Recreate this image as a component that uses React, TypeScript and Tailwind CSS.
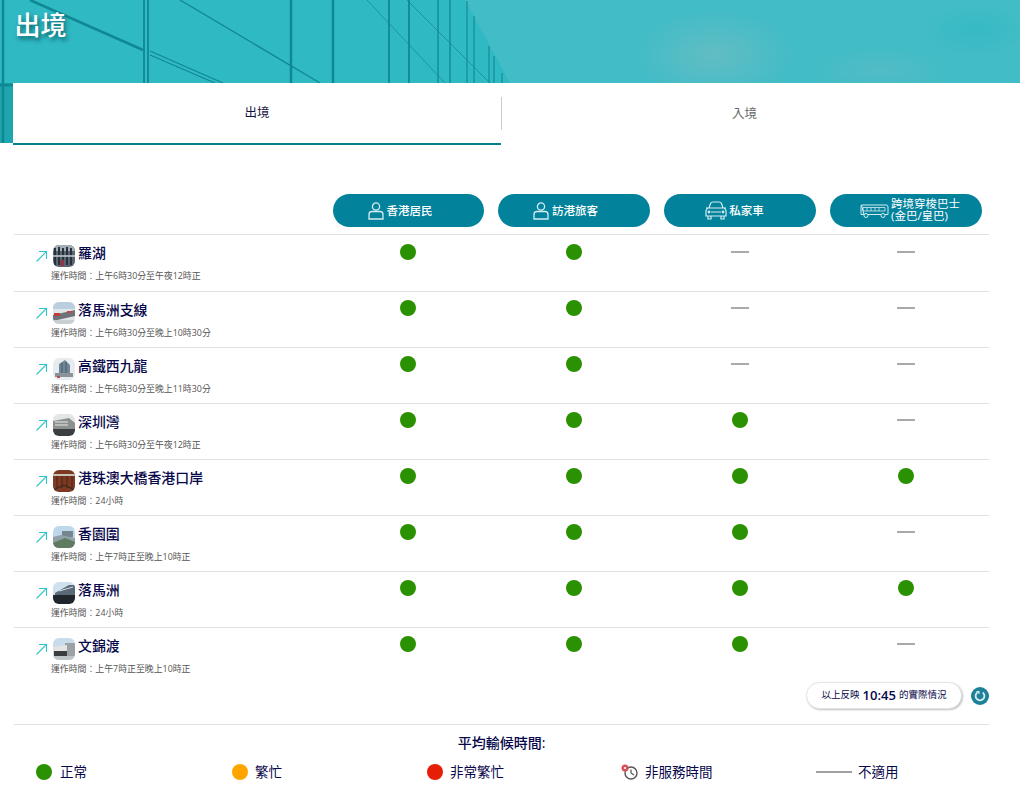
import type { ReactNode } from "react";

const FONT = "font-['Open_Sans','Noto_Sans_CJK_TC','Noto_Sans',sans-serif]";

type Status = "ok" | "na";

const thumbs: Record<string, ReactNode> = {
  lowu: (
    <>
      <rect width="22" height="22" fill="#5b6672" />
      <rect y="0" width="22" height="6" fill="#a3aeb8" />
      <path d="M2 3v17M6 2v18M10 3v17M14 2v18M18 3v17" stroke="#28323c" strokeWidth="2" />
      <path d="M0 11h22" stroke="#c8d0d6" strokeWidth="1.5" />
      <rect x="7" y="15" width="4" height="6" fill="#8a3b45" />
    </>
  ),
  lmcspur: (
    <>
      <rect width="22" height="22" fill="#dfe6ea" />
      <rect y="0" width="22" height="7" fill="#b9cfe0" />
      <path d="M0 13 22 8v6L0 19z" fill="#6d7378" />
      <rect x="1" y="11" width="6" height="3" fill="#c23b3b" />
      <rect x="14" y="9" width="5" height="2" fill="#b84a4a" />
      <rect y="18" width="22" height="4" fill="#c9ced1" />
    </>
  ),
  wkl: (
    <>
      <rect width="22" height="22" fill="#e6ecef" />
      <path d="M6 17V6l6-4 5 5v10z" fill="#6f8796" />
      <path d="M9 5v12M13 4v13" stroke="#465a68" />
      <rect x="2" y="15" width="18" height="4" fill="#8b9298" />
      <rect x="4" y="18" width="3" height="2" fill="#b9524f" />
    </>
  ),
  sz: (
    <>
      <rect width="22" height="22" fill="#e3e6e6" />
      <path d="M0 7 16 4l6 5v6H0z" fill="#8b8f8e" />
      <path d="M2 8h13M2 11h13" stroke="#ececec" />
      <rect y="15" width="22" height="7" fill="#3b3f42" />
    </>
  ),
  hzmb: (
    <>
      <rect width="22" height="22" fill="#7c3a22" />
      <path d="M0 4h22v2H0z" fill="#c9c3b8" />
      <path d="M4 6v12M9 6v12M14 6v12M19 6v12" stroke="#4d2213" />
      <path d="M0 20 11 15l11 5" stroke="#2c2420" fill="none" />
    </>
  ),
  hyw: (
    <>
      <rect width="22" height="22" fill="#bcd8ea" />
      <rect x="9" y="5" width="11" height="6" fill="#77858d" />
      <path d="M0 11 8 9l14 3v10H0z" fill="#8fa1a6" />
      <path d="M0 17 12 12l10 4v6H0z" fill="#5f7c5f" />
    </>
  ),
  lmc: (
    <>
      <rect width="22" height="22" fill="#cfe0ee" />
      <path d="M2 11 16 3h6v10H2z" fill="#5a6975" />
      <path d="M6 9 20 5" stroke="#d8e0e6" />
      <rect y="13" width="22" height="9" fill="#20262c" />
    </>
  ),
  mkt: (
    <>
      <rect width="22" height="22" fill="#c8dcec" />
      <rect x="12" y="5" width="10" height="13" fill="#9aa2a6" />
      <path d="M0 9 14 7v6H0z" fill="#e4e4e2" />
      <rect x="1" y="13" width="13" height="5" fill="#3a3d40" />
      <rect y="18" width="22" height="4" fill="#bfc4c6" />
    </>
  ),
};

const rows: { name: string; hours: string; thumb: string; status: Status[] }[] = [
  { name: "羅湖", hours: "運作時間：上午6時30分至午夜12時正", thumb: "lowu", status: ["ok", "ok", "na", "na"] },
  { name: "落馬洲支線", hours: "運作時間：上午6時30分至晚上10時30分", thumb: "lmcspur", status: ["ok", "ok", "na", "na"] },
  { name: "高鐵西九龍", hours: "運作時間：上午6時30分至晚上11時30分", thumb: "wkl", status: ["ok", "ok", "na", "na"] },
  { name: "深圳灣", hours: "運作時間：上午6時30分至午夜12時正", thumb: "sz", status: ["ok", "ok", "ok", "na"] },
  { name: "港珠澳大橋香港口岸", hours: "運作時間：24小時", thumb: "hzmb", status: ["ok", "ok", "ok", "ok"] },
  { name: "香園圍", hours: "運作時間：上午7時正至晚上10時正", thumb: "hyw", status: ["ok", "ok", "ok", "na"] },
  { name: "落馬洲", hours: "運作時間：24小時", thumb: "lmc", status: ["ok", "ok", "ok", "ok"] },
  { name: "文錦渡", hours: "運作時間：上午7時正至晚上10時正", thumb: "mkt", status: ["ok", "ok", "ok", "na"] },
];

function PersonIcon() {
  return (
    <svg width="16" height="18" viewBox="0 0 16 18" fill="none" stroke="#d5edf2" strokeWidth="1.3" className="shrink-0">
      <circle cx="8" cy="4.500" r="3.600" />
      <path d="M1 17v-4.500a3 3 0 0 1 3-3h8a3 3 0 0 1 3 3V17z" />
    </svg>
  );
}

function CarIcon() {
  return (
    <svg width="22" height="19" viewBox="0 0 22 19" fill="none" stroke="#d5edf2" strokeWidth="1.2" className="shrink-0">
      <path d="M4 7 5.500 2.500Q6 1 8 1h6q2 0 2.500 1.500L18 7" />
      <path d="M3 7h16q2 1 2 3v5H1v-5q0-2 2-3z" />
      <path d="M3 15v3h3v-3M16 15v3h3v-3M6 11h10M1 7h2M19 7h2" />
      <circle cx="4" cy="11" r="0.800" />
      <circle cx="18" cy="11" r="0.800" />
    </svg>
  );
}

function BusIcon() {
  return (
    <svg width="29" height="14" viewBox="0 0 29 14" fill="none" stroke="#d5edf2" strokeWidth="1" className="shrink-0">
      <path d="M1.500 1h25q1.500 0 1.500 2v7.500h-3M21 10.500H8M4 10.500H1V2.500q0-1.500 .5-1.500z" />
      <path d="M3 3.500h22v3.500H3zM7 3.500v3.500M11 3.500v3.500M15 3.500v3.500M19 3.500v3.500" strokeWidth="0.800" />
      <circle cx="6" cy="11.500" r="2" />
      <circle cx="23" cy="11.500" r="2" />
    </svg>
  );
}

function Dot({ color = "bg-[#2a9103]" }: { color?: string }) {
  return <span className={`block h-4 w-4 shrink-0 rounded-full ${color}`} />;
}

function HeaderPill({ icon, children, cls }: { icon: ReactNode; children: ReactNode; cls: string }) {
  return (
    <div className="px-[7px]">
      <div className={`flex h-[33px] items-center justify-center rounded-[17px] bg-[#03829c] text-[11.5px] font-medium text-white ${cls}`}>
        {icon}
        {children}
      </div>
    </div>
  );
}

function Hero() {
  return (
    <svg viewBox="0 0 1020 143" preserveAspectRatio="none" className="absolute left-0 top-0 h-[143px] w-full">
      <defs>
        <radialGradient id="cloud">
          <stop offset="0" stopColor="#62bdc4" />
          <stop offset="1" stopColor="#62bdc4" stopOpacity="0" />
        </radialGradient>
        <radialGradient id="deep">
          <stop offset="0" stopColor="#2cb9c4" />
          <stop offset="1" stopColor="#2cb9c4" stopOpacity="0" />
        </radialGradient>
      </defs>
      <rect width="1020" height="143" fill="#42bcc6" />
      <ellipse cx="715" cy="55" rx="80" ry="45" fill="url(#cloud)" />
      <ellipse cx="880" cy="70" rx="70" ry="22" fill="url(#cloud)" opacity="0.5" />
      <ellipse cx="975" cy="30" rx="50" ry="25" fill="url(#deep)" opacity="0.6" />
      <path d="M0 0H465L510 83V143H0z" fill="#2fb9c3" />
      <path d="M0 83H13V143H0z" fill="#1fa5ae" />
      <g stroke="#0f8894" fill="none">
        <path d="M3 0v143" strokeWidth="2.500" />
        <path d="M144 0v84M148 0v84" strokeWidth="1.800" />
        <path d="M291 0v84" strokeWidth="2.500" />
        <path d="M333 0v84" strokeWidth="2.500" />
        <path d="M389 0v84M409 0v84" strokeWidth="1.800" />
        <path d="M438 0v84M450 0v84" strokeWidth="1.300" />
        <path d="M467 1v83M474 16v68M489 46v38M494 56v28M502 73v11" strokeWidth="1.100" />
        <path d="M30 0 143 50" strokeWidth="2.500" />
        <path d="M150 51 223 83M150 55 215 83" strokeWidth="1.300" />
        <path d="M180 0 320 83" strokeWidth="1.300" />
        <path d="M367 0 445 83M407 0 490 83" strokeWidth="0.700" />
        <path d="M0 85h13" strokeWidth="3" />
      </g>
    </svg>
  );
}

function Row({ row, first }: { row: (typeof rows)[number]; first: boolean }) {
  return (
    <div className={`grid grid-cols-[311px_repeat(4,166px)] border-t border-[#e0e0e6] ${first ? "h-[57px]" : "h-[56px]"}`}>
      <div className="pl-[22px] pt-[10px]">
        <div className="flex h-[22px] items-center">
          <svg width="11" height="11" viewBox="0 0 11 11" fill="none" stroke="#2dc3cc" strokeWidth="1.100" className="mt-[1px] shrink-0">
            <path d="M.5 10.500 10.500 .5M3 .5h7.500V8" />
          </svg>
          <svg width="22" height="22" viewBox="0 0 22 22" className="ml-[6px] shrink-0 rounded-[6px] blur-[0.3px]">
            {thumbs[row.thumb]}
          </svg>
          <span className="mb-[6px] ml-[3px] text-[13.900px] font-medium leading-none text-[#07074a]">{row.name}</span>
        </div>
        <p className="ml-[15px] mt-[2px] text-[8.900px] leading-[14px] text-[#555]">{row.hours}</p>
      </div>
      {row.status.map((s, i) => (
        <div key={i} className={`flex justify-center ${first ? "pt-[9px]" : "pt-[8px]"}`}>
          {s === "ok" ? <Dot /> : <span className="mt-[7px] block h-[2px] w-[18px] bg-[#aaa]" />}
        </div>
      ))}
    </div>
  );
}

export default function App() {
  return (
    <div className={`min-h-[794px] bg-white ${FONT}`}>
      <div className="relative">
        <Hero />
        <div className="relative flex h-[83px] items-start pl-[14.500px] pt-[7px]">
          <h1 className="text-[26px] font-medium leading-[36px] text-white [text-shadow:2px_3px_4px_rgba(0,70,80,0.75)]">出境</h1>
        </div>
        <div className="relative ml-[13px] flex h-[62px] bg-white text-[12.500px]">
          <div className="flex w-[488px] items-center justify-center border-b-2 border-[#03808e] text-[#14143c]">出境</div>
          <div className="flex flex-1 items-center justify-center pr-[32px] text-[#666]">
            <span className="absolute left-[488px] top-[14px] h-[33px] w-px bg-[#ccc]" />
            入境
          </div>
        </div>
      </div>

      <div className="mx-[14px] w-[975px]">
        <div className="grid grid-cols-[311px_repeat(4,166px)] pb-[7px] pt-[49px]">
          <div />
          <HeaderPill icon={<PersonIcon />} cls="ml-[1px] gap-[3px] pr-[17px]">香港居民</HeaderPill>
          <HeaderPill icon={<PersonIcon />} cls="gap-[3px] pr-[17px]">訪港旅客</HeaderPill>
          <HeaderPill icon={<CarIcon />} cls="gap-[2px] pr-[11px]">私家車</HeaderPill>
          <HeaderPill icon={<BusIcon />} cls="gap-[2px] pl-[9px]">
            <span className="-mt-[2px] block w-[70px] text-[11.500px] font-normal leading-[12px]">跨境穿梭巴士<br />(金巴/皇巴)</span>
          </HeaderPill>
        </div>
        {rows.map((row, i) => (
          <Row key={row.name} row={row} first={i === 0} />
        ))}
        <div className="flex h-[42px] items-start justify-end border-b border-[#e0e0e6]">
          <div className="-mt-[1px] flex h-[27px] w-[156px] items-center justify-center rounded-full border border-[#e4e4e8] bg-white text-[9.500px] text-[#07074a] shadow-[1px_1px_2px_rgba(0,0,0,0.25)]">
            以上反映<b className="mx-[3px] text-[13px] font-semibold">10:45</b>的實際情況
          </div>
          <svg width="18" height="18" viewBox="0 0 18 18" className="ml-[9px] mt-[3.500px] shrink-0">
            <circle cx="9" cy="9" r="9" fill="#1c8199" />
            <path d="M6.300 5.500a4.400 4.400 0 1 0 5.400 0" fill="none" stroke="#d9eef3" strokeWidth="1.800" />
            <path d="M5 4h3.500v3.500z" fill="#d9eef3" />
          </svg>
        </div>
      </div>

      <p className="mr-[17px] pt-[9px] text-center text-[14px] font-medium leading-[18px] text-[#07074a]">平均輸候時間:</p>
      <div className="ml-[36px] mt-[10px] grid grid-cols-[196px_195px_194px_195px_1fr] text-[13.500px] leading-[20px] text-[#07074a]">
        <div className="flex items-center gap-2"><Dot />正常</div>
        <div className="flex items-center gap-[7px]"><Dot color="bg-[#ffa500]" />繁忙</div>
        <div className="flex items-center gap-[7px]"><Dot color="bg-[#e61e05]" />非常繁忙</div>
        <div className="flex items-center gap-[7px]">
          <svg width="17" height="16" viewBox="0 0 17 16" fill="none" className="shrink-0">
            <circle cx="10" cy="9" r="6" stroke="#555" strokeWidth="1.400" />
            <path d="M10 5.500V9l3 2" stroke="#555" strokeWidth="1.200" />
            <circle cx="4" cy="4" r="3.500" fill="#dc4a55" />
            <path d="M2.800 2.800l2.400 2.400M5.200 2.800 2.800 5.200" stroke="#fff" strokeWidth="0.900" />
          </svg>
          非服務時間
        </div>
        <div className="flex items-center gap-[6px]"><span className="h-[2px] w-9 bg-[#a0a0a0]" />不適用</div>
      </div>
    </div>
  );
}
